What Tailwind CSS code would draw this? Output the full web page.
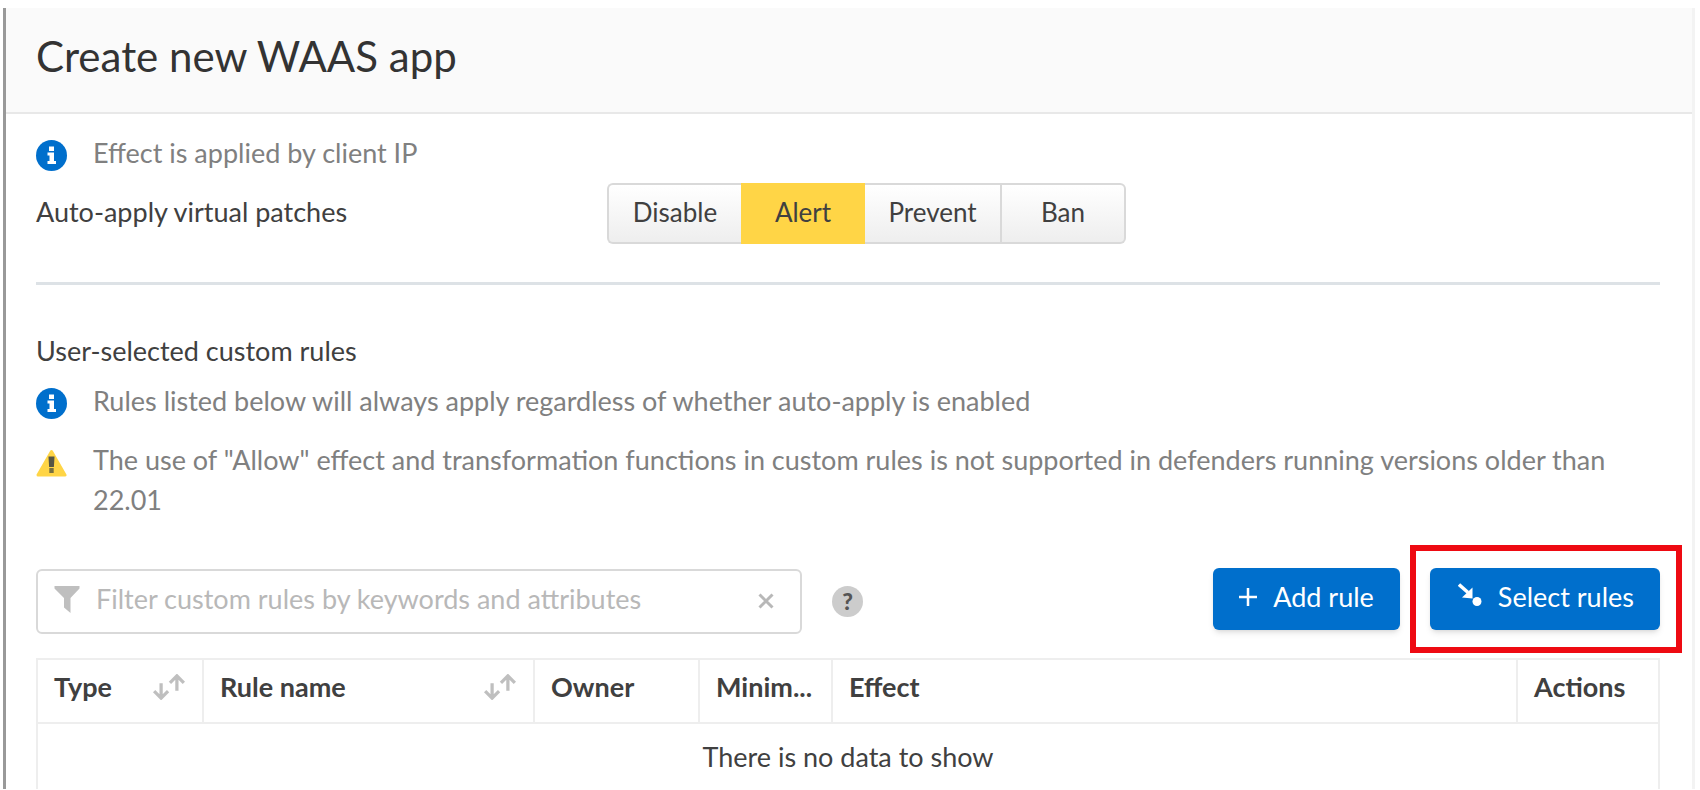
<!DOCTYPE html>
<html lang="en">
<head>
<meta charset="utf-8">
<title>Create new WAAS app</title>
<script src="https://cdn.jsdelivr.net/npm/@tailwindcss/browser@4"></script>
</head>
<body class="bg-white font-['Lato',sans-serif] text-[27px] leading-10 text-[#404040]">
<div class="ml-[3px] mr-[5px] mt-2 border-l-3 border-l-[#999] border-r-3 border-r-[#f3f3f3]">
  <header class="border-b-2 border-[#e8e8e8] bg-[#fafafa] px-[30px] pt-5 pb-[28px]">
    <h1 class="text-[42px] leading-[56px] text-[#333]">Create new WAAS app</h1>
  </header>
  <main class="pt-[19px] pr-8 pl-[30px]">
    <div class="flex items-center gap-[26px] text-[#808080]">
      <svg class="size-[31px] shrink-0" viewBox="0 0 31 31" aria-hidden="true"><circle cx="15.500" cy="15.500" r="15.500" fill="#006fcc"/><path fill="#fff" d="M13 6.500h5v4.500h-5zM11.500 12.500H18v8.500h2v3h-8.500v-3h2v-5.500h-2z"/></svg>
      <p class="pb-1">Effect is applied by client IP</p>
    </div>
    <div class="mt-[6px] flex items-center">
      <span id="patches" class="w-[571px] pb-1">Auto-apply virtual patches</span>
      <div role="group" aria-labelledby="patches" class="flex h-[61px] text-[26px]">
        <button type="button" class="w-[134px] rounded-l-md border-2 border-r-0 border-[#d9d9d9] bg-linear-to-b from-white to-[#eee] pb-1">Disable</button>
        <button type="button" aria-pressed="true" class="w-[124px] bg-[#ffd546] pb-1">Alert</button>
        <button type="button" class="w-[137px] border-2 border-l-0 border-[#d9d9d9] bg-linear-to-b from-white to-[#eee] pb-1">Prevent</button>
        <button type="button" class="w-[124px] rounded-r-md border-2 border-l-0 border-[#d9d9d9] bg-linear-to-b from-white to-[#eee] pb-1">Ban</button>
      </div>
    </div>
    <hr class="mt-[38px] border-t-3 border-[#dde2e6]">
    <h2 class="mt-[46px]">User-selected custom rules</h2>
    <div class="mt-[10px] flex items-center gap-[26px] text-[#808080]">
      <svg class="size-[31px] shrink-0" viewBox="0 0 31 31" aria-hidden="true"><circle cx="15.500" cy="15.500" r="15.500" fill="#006fcc"/><path fill="#fff" d="M13 6.500h5v4.500h-5zM11.500 12.500H18v8.500h2v3h-8.500v-3h2v-5.500h-2z"/></svg>
      <p class="pb-1">Rules listed below will always apply regardless of whether auto-apply is enabled</p>
    </div>
    <div class="mt-[15px] flex gap-[26px] text-[#808080]">
      <svg class="mt-2 size-[31px] shrink-0" viewBox="0 0 31 31" aria-hidden="true"><path fill="#ffd546" stroke="#ffd546" stroke-width="3" stroke-linejoin="round" d="M15.500 3.500 29 27H2z"/><path fill="#555544" d="M12.500 8.500h6l-.6 10.500h-4.800z"/><path fill="#777040" d="M13.300 20h4.400v5h-4.400z"/></svg>
      <p>The use of "Allow" effect and transformation functions in custom rules is not supported in defenders running versions older than 22.01</p>
    </div>
    <div class="mt-12 flex items-center">
      <div class="flex h-[65px] w-[766px] items-center rounded-md border-2 border-[#d9d9d9] px-4">
        <svg class="mb-1 h-[27px] w-[26px] shrink-0" viewBox="0 0 26 27" fill="#bfbfbf" aria-hidden="true"><path d="M.5 0h25v2.500L16.500 12v15L10 21.500V12L.5 2.500z"/></svg>
        <input type="text" aria-label="Filter custom rules" placeholder="Filter custom rules by keywords and attributes" class="ml-4 min-w-0 flex-1 pb-1 outline-none placeholder:text-[#b8b8b8]">
        <button type="button" aria-label="Clear filter" class="mr-[10px]"><svg class="size-4" viewBox="0 0 16 16" fill="none" stroke="#b8b8b8" stroke-width="3" aria-hidden="true"><path d="M1.500 1.500l13 13M14.500 1.500l-13 13"/></svg></button>
      </div>
      <button type="button" aria-label="Help" class="ml-[30px] size-[31px] rounded-full bg-[#ccc] text-[23px] leading-[31px] font-black text-[#555]">?</button>
      <div class="mb-1 ml-auto flex gap-[30px]">
        <button type="button" class="flex h-[62px] items-center gap-4 rounded-md bg-[#006fcc] px-[26px] pb-1 text-white shadow-md">
          <svg class="size-[18px]" viewBox="0 0 18 18" stroke="#fff" stroke-width="2.500" aria-hidden="true"><path d="M9 0v18M0 9h18"/></svg>Add rule</button>
        <div class="relative">
          <button type="button" class="flex h-[62px] items-center gap-4 rounded-md bg-[#006fcc] pr-[26px] pb-1 pl-[28px] text-white shadow-md">
            <svg class="mb-1 size-6" viewBox="0 0 24 24" aria-hidden="true"><path fill="none" stroke="#fff" stroke-width="3.500" d="M1 1.500l9 8"/><path fill="#fff" d="M14.500 4.500V15.500L4 14.500z"/><circle cx="19" cy="18.500" r="4.500" fill="#fff"/></svg>Select rules</button>
          <div class="pointer-events-none absolute -top-[23px] -right-[22px] -bottom-[23px] -left-[20px] border-6 border-[#ee0a12]"></div>
        </div>
      </div>
    </div>
    <table class="mt-[24px] w-full table-fixed border-collapse text-left">
      <colgroup><col class="w-[166px]"><col class="w-[331px]"><col class="w-[165px]"><col class="w-[133px]"><col><col class="w-[142px]"></colgroup>
      <thead>
        <tr class="h-[64px]">
          <th class="border-2 border-[#eee] px-4 pb-2"><div class="flex items-center justify-between">Type
            <button type="button" aria-label="Sort by type"><svg class="h-[26px] w-[34px]" viewBox="0 0 35 28" fill="none" stroke="#bfbfbf" stroke-width="3.500" aria-hidden="true"><path d="M9 10v16M1.500 18.500 9 26l7.500-7.500M26 18V2M18.500 9.500 26 2l7.500 7.500"/></svg></button></div></th>
          <th class="border-2 border-[#eee] px-4 pb-2"><div class="flex items-center justify-between">Rule name
            <button type="button" aria-label="Sort by rule name"><svg class="h-[26px] w-[34px]" viewBox="0 0 35 28" fill="none" stroke="#bfbfbf" stroke-width="3.500" aria-hidden="true"><path d="M9 10v16M1.500 18.500 9 26l7.500-7.500M26 18V2M18.500 9.500 26 2l7.500 7.500"/></svg></button></div></th>
          <th class="border-2 border-[#eee] px-4 pb-2">Owner</th>
          <th class="border-2 border-[#eee] px-4 pb-2">Minim...</th>
          <th class="border-2 border-[#eee] px-4 pb-2">Effect</th>
          <th class="border-2 border-[#eee] px-4 pb-2">Actions</th>
        </tr>
      </thead>
      <tbody>
        <tr class="h-[66px]"><td colspan="6" class="border-x-2 border-[#eee] text-center">There is no data to show</td></tr>
      </tbody>
    </table>
  </main>
</div>
</body>
</html>
